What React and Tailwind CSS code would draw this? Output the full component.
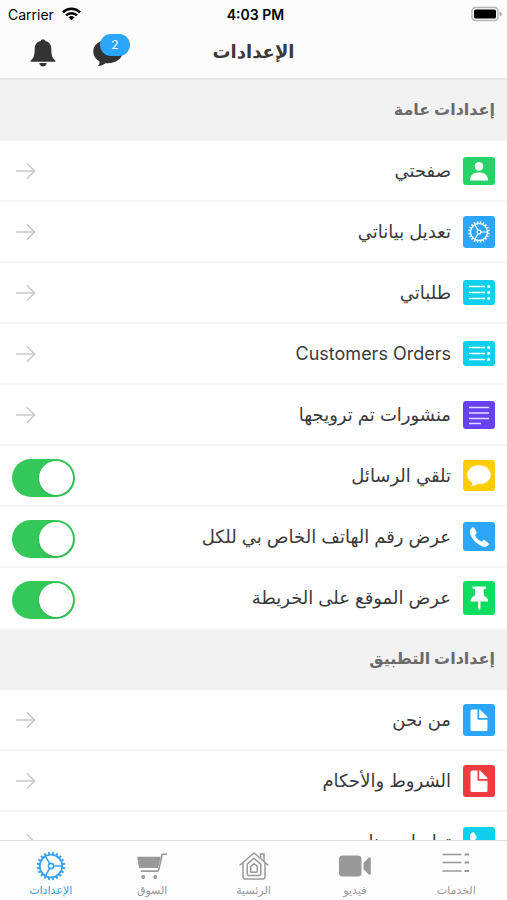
import React, { useState } from 'react';

// Ícono de engranaje: dientes alrededor y tres radios
const GearIcon = ({ className }) => {
    const teeth = Array.from({ length: 20 }, (_, i) => i * 18 + 9);
    return (
        <svg viewBox="0 0 32 32" className={className} fill="none" stroke="currentColor" aria-hidden="true">
            {teeth.map((angle) => (
                <path key={angle} d="M16 1.700v3" strokeWidth="1.900" transform={`rotate(${angle} 16 16)`} />
            ))}
            <circle cx="16" cy="16" r="11.3" strokeWidth="1.800" />
            <circle cx="16" cy="16" r="2.6" strokeWidth="1.6" />
            <path d="M18.6 16h8.8M14.7 13.7l-4.4-7.6M14.7 18.3l-4.4 7.6" strokeWidth="1.6" />
        </svg>
    );
};

const PersonIcon = () => (
    <svg viewBox="0 0 32 28" className="w-8 h-7" fill="#fff" aria-hidden="true">
        <circle cx="16" cy="9.4" r="4.3" />
        <path d="M7 23.4c0-5.400 3.600-8 9-8s9 2.600 9 8z" />
    </svg>
);

const ListIcon = ({ className }) => (
    <svg viewBox="0 0 32 25" className={className} stroke="currentColor" strokeWidth="1.5" aria-hidden="true">
        <path d="M6 6.500h16M6 12.500h16M6 18.500h16" />
        <path d="M24.200 6.500h2.800M24.200 12.500h2.800M24.200 18.500h2.800" strokeWidth="2.600" />
    </svg>
);

const ServicesIcon = () => (
    <svg viewBox="0 0 32 26" className="w-8 h-[26px]" stroke="currentColor" strokeWidth="1.500" aria-hidden="true">
        <path d="M2.500 1.500h19M2.500 9.500h19M2.500 18h19" />
        <path d="M24.500 1.500h4.500M24.500 9.500h4.500M24.500 18h4.500" strokeWidth="2.200" />
    </svg>
);

const PostIcon = () => (
    <svg viewBox="0 0 32 28" className="w-8 h-7" stroke="#e4dcff" strokeWidth="1.700" aria-hidden="true">
        <path d="M6 6.500h20M6 12h20M6 17.500h20M6 22.500h12" />
    </svg>
);

const BubbleIcon = ({ className }) => (
    <svg viewBox="0 0 32 32" className={className} fill="currentColor" aria-hidden="true">
        <path d="M16 5.300C9.400 5.300 4.200 9.500 4.200 14.800c0 3.400 2 6.200 5.100 7.900 0 1.700-.6 2.700-1.600 3.700 2.800-.2 4.800-1 6.200-2.300.7.1 1.400.1 2.100.1 6.600 0 11.800-4.100 11.800-9.400S22.600 5.300 16 5.300z" />
    </svg>
);

const PhoneIcon = () => (
    <svg viewBox="0 0 32 30" className="w-8 h-[30px]" fill="#fff" aria-hidden="true">
        <path d="M8.300 6.300c.9-1 2-1.400 2.700-.7l2.500 4.200c.4.800.1 1.500-.6 2.100-.8.600-.9 1.200-.5 2 1.300 2.400 3 4.100 5.300 5.400.7.400 1.400.3 2-.5.6-.8 1.300-1 2.100-.5l3.500 2.600c.7.600.7 1.500 0 2.300-1.500 1.700-3.600 2-6 1-6.100-2.500-9.900-6.500-12-12-.8-2.300-.5-4.300 1-5.900z" />
    </svg>
);

const PinIcon = () => (
    <svg viewBox="0 0 32 34" className="w-8 h-[34px]" fill="#fff" aria-hidden="true">
        <path d="M10 5.500h12.500c.9 0 .9 2 0 2.300l-2 .7.500 6.300c2.700 1.100 4 2.900 4.200 5.700h-7.700v6.500L16.300 29.500l-1.200-2.500v-6.500H7.500c.2-2.800 1.500-4.600 4.200-5.700l.5-6.300-2.200-.7c-.9-.3-.9-2.300 0-2.300z" />
    </svg>
);

const DocIcon = () => (
    <svg viewBox="0 0 32 32" className="w-8 h-8" fill="#fff" aria-hidden="true">
        <path d="M9.500 5.500h5v9.200c0 .6.400 1 1 1h9v9.800c0 1-.6 1.500-1.500 1.500H9.200C8 27 7.500 26.500 7.500 25.500v-18c0-1.300.7-2 2-2z" />
        <path d="M16.200 5.500h.8l7.500 7.600v1h-8.300z" />
    </svg>
);

const BellIcon = () => (
    <svg viewBox="0 0 26 28" className="w-[26px] h-7" fill="currentColor" aria-hidden="true">
        <path d="M13 .3c-1.100 0-2 .7-2.400 1.700C6.300 3 4.800 6 4.700 10c-.1 6.500-1.100 9.500-4.100 11.500v1.200h24.800v-1.200c-3-2-4-5-4.100-11.500-.1-4-1.600-7-5.900-8C15 1 14.100.3 13 .3z" />
        <path d="M9.300 24.100h7.400c-.3 2-1.700 3.400-3.700 3.400s-3.400-1.400-3.700-3.400z" />
    </svg>
);

const ArrowIcon = () => (
    <svg viewBox="0 0 20 18" className="w-5 h-[18px] text-[#c9c9cb]" fill="none" stroke="currentColor" strokeWidth="1.500" aria-hidden="true">
        <path d="M0 9h18.500M10.800 1.300L18.700 9l-7.900 7.700" />
    </svg>
);

const CartIcon = () => (
    <svg viewBox="0 0 32 28" className="w-8 h-7" fill="currentColor" aria-hidden="true">
        <path d="M1.200 4.700h23.600l-2.500 10c-.2.900-.7 1.300-1.500 1.300H4.300c-.9 0-1.400-.4-1.500-1.200z" />
        <path d="M31 2.200h-4.800L22.700 17.800c-.2.900-.7 1.300-1.600 1.300H4.800" fill="none" stroke="currentColor" strokeWidth="1.600" />
        <circle cx="7.300" cy="25" r="2" />
        <circle cx="19.200" cy="25" r="2" />
    </svg>
);

const HomeIcon = () => (
    <svg viewBox="0 0 32 30" className="w-8 h-[30px]" fill="none" stroke="currentColor" strokeWidth="1.500" aria-hidden="true">
        <path d="M1.500 14.500L16 2l14.500 12.500M22.500 7V3h3.500v7.200M5 12v13.700c0 1.500.8 2.300 2.300 2.300h17.400c1.500 0 2.300-.8 2.300-2.300V12" />
        <path d="M9.200 23V13.200L16 7.200l6.800 6V23c0 1-.5 1.500-1.500 1.500H10.700c-1 0-1.500-.5-1.500-1.500z" />
        <path d="M12.700 20.500v-5L16 12.600l3.300 2.900v5c0 .5-.3.800-.8.800h-5c-.5 0-.8-.3-.8-.8z" />
    </svg>
);

const VideoIcon = () => (
    <svg viewBox="0 0 32 22" className="w-8 h-[22px]" fill="currentColor" aria-hidden="true">
        <rect x="0" y="0.500" width="22.500" height="21" rx="3.500" />
        <path d="M24.500 8l5-5.200c1.100-1 2.300-.7 2.300.7v15c0 1.400-1.200 1.700-2.300.7l-5-5.200z" />
    </svg>
);

const SectionTitle = ({ children }) => (
    <h2 className="h-[61px] pb-1 px-3 flex items-center bg-[#f2f2f2] text-[#6b6b6b] text-[16px] font-bold">
        {children}
    </h2>
);

const IconBox = ({ color, height, children }) => (
    <span className={`w-8 ${height} ${color} rounded-[3px] shrink-0 flex items-center justify-center text-white overflow-hidden`}>
        {children}
    </span>
);

const LinkRow = ({ label, ...box }) => (
    <li className="border-b-2 border-[#f5f5f5]">
        <a href="#" className="h-[59px] pr-3 pl-4 flex items-center gap-3">
            <IconBox {...box} />
            <span className="grow text-[18px]">{label}</span>
            <ArrowIcon />
        </a>
    </li>
);

const SwitchRow = ({ label, ...box }) => {
    const [checked, setChecked] = useState(true);

    return (
        <li className="border-b-2 border-[#f5f5f5] last:border-white">
            <label className="h-[59px] px-3 flex items-center gap-3 cursor-pointer">
                <IconBox {...box} />
                <span className="grow text-[18px]">{label}</span>
                <input
                    type="checkbox"
                    role="switch"
                    dir="ltr"
                    checked={checked}
                    onChange={(e) => setChecked(e.target.checked)}
                    className="appearance-none w-[63px] h-[38px] mt-1 p-[2px] rounded-full bg-gray-300 checked:bg-[#34c759] flex shrink-0 justify-start checked:justify-end before:block before:w-[34px] before:h-[34px] before:rounded-full before:bg-white before:shadow-sm"
                />
            </label>
        </li>
    );
};

const tabs = [
    { label: 'الخدمات', icon: <ServicesIcon /> },
    { label: 'فيديو', icon: <VideoIcon /> },
    { label: 'الرئسية', icon: <HomeIcon /> },
    { label: 'السوق', icon: <CartIcon /> },
    { label: 'الإعدادات', icon: <GearIcon className="w-8 h-8" />, active: true },
];

const App = () => {
    return (
        <div dir="rtl" className="h-screen flex flex-col bg-white text-[#3a3a3a] font-['Inter','DejaVu_Sans',sans-serif] overflow-hidden">
            <header className="shrink-0 bg-[#fcfcfc] border-b-2 border-[#e6e6e6]">
                {/* Barra de estado */}
                <div dir="ltr" className="h-7 pl-2 pr-1 grid grid-cols-3 items-center text-black text-[14px]">
                    <div className="flex items-center gap-2">
                        <span>Carrier</span>
                        <svg viewBox="0 0 20 14" className="w-[19px] h-[14px]" fill="none" stroke="#000" strokeWidth="2.600" aria-hidden="true">
                            <path d="M1 5.200a13 13 0 0 1 18 0M4.200 8.500a8.300 8.300 0 0 1 11.600 0" />
                            <path d="M10 13.600L6.900 10.700a4.500 4.500 0 0 1 6.200 0z" fill="#000" stroke="none" />
                        </svg>
                    </div>
                    <span className="text-center font-semibold">4:03 PM</span>
                    <svg viewBox="0 0 32 16" className="w-8 h-4 justify-self-end" aria-hidden="true">
                        <rect x="1" y="1.500" width="26" height="13" rx="3.500" fill="#fff" stroke="#b5b5b5" strokeWidth="1.500" />
                        <rect x="3" y="3.500" width="22" height="9" rx="1.500" fill="#000" />
                        <path d="M28.500 5.500c1.700.5 2.500 1.300 2.500 2.500s-.8 2-2.500 2.500z" fill="#b5b5b5" />
                    </svg>
                </div>
                <div className="h-[50px] px-[30px] grid grid-cols-[1fr_auto_1fr] items-center">
                    <h1 className="col-start-2 pb-1 text-[18px] font-bold">الإعدادات</h1>
                    <div dir="ltr" className="flex items-center gap-8 text-[#333]">
                        <button type="button" aria-label="الإشعارات">
                            <BellIcon />
                        </button>
                        <button type="button" aria-label="الرسائل" className="relative">
                            <BubbleIcon className="w-10 h-10" />
                            <span className="absolute left-3 top-px w-[30px] h-[22px] rounded-full bg-[#2ba6fb] text-white text-[12px] flex items-center justify-center">
                                2
                            </span>
                        </button>
                    </div>
                </div>
            </header>

            <main className="grow min-h-0 overflow-hidden">
                <SectionTitle>إعدادات عامة</SectionTitle>
                <ul>
                    <LinkRow label="صفحتي" color="bg-[#25d366]" height="h-7"><PersonIcon /></LinkRow>
                    <LinkRow label="تعديل بياناتي" color="bg-[#2ba6fb]" height="h-8"><GearIcon className="w-6 h-6" /></LinkRow>
                    <LinkRow label="طلباتي" color="bg-[#10cfec]" height="h-[25px]"><ListIcon className="w-8 h-[25px]" /></LinkRow>
                    <LinkRow label="Customers Orders" color="bg-[#10cfec]" height="h-[25px]"><ListIcon className="w-8 h-[25px]" /></LinkRow>
                    <LinkRow label="منشورات تم ترويجها" color="bg-[#6841f5]" height="h-7"><PostIcon /></LinkRow>
                    <SwitchRow label="تلقي الرسائل" color="bg-[#ffcc05]" height="h-[31px]"><BubbleIcon className="w-8 h-8" /></SwitchRow>
                    <SwitchRow label="عرض رقم الهاتف الخاص بي للكل" color="bg-[#2ba6fb]" height="h-[29px]"><PhoneIcon /></SwitchRow>
                    <SwitchRow label="عرض الموقع على الخريطة" color="bg-[#10dc60]" height="h-[34px]"><PinIcon /></SwitchRow>
                </ul>

                <SectionTitle>إعدادات التطبيق</SectionTitle>
                <ul>
                    <LinkRow label="من نحن" color="bg-[#2ba6fb]" height="h-8"><DocIcon /></LinkRow>
                    <LinkRow label="الشروط والأحكام" color="bg-[#ee3b40]" height="h-8"><DocIcon /></LinkRow>
                    <LinkRow label="تواصل معنا" color="bg-[#10cfec]" height="h-[29px]"><PhoneIcon /></LinkRow>
                </ul>
            </main>

            <nav className="h-[60px] shrink-0 grid grid-cols-5 bg-[#fdfdfd] border-t border-[#dcdcdc]">
                {tabs.map((tab) => (
                    <a
                        key={tab.label}
                        href="#"
                        className={`pt-2 flex flex-col items-center text-[11px] leading-4 ${tab.active ? 'text-[#3ba2f2]' : 'text-[#999]'}`}
                    >
                        <span className="h-[33px] flex items-center">{tab.icon}</span>
                        {tab.label}
                    </a>
                ))}
            </nav>
        </div>
    );
};

export default App;
